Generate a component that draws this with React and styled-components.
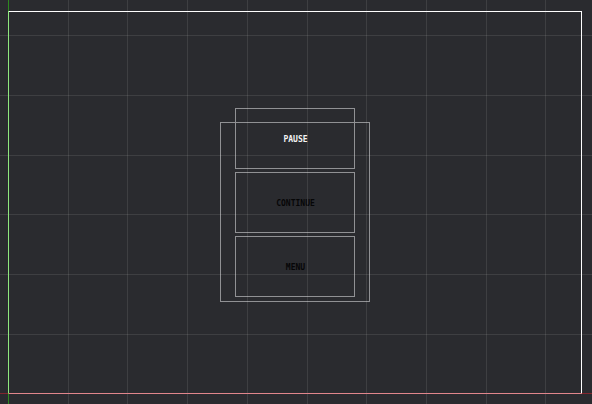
import React from "react";
import styled, { createGlobalStyle } from "styled-components";

const GlobalStyle = createGlobalStyle`
  *, *::before { box-sizing: border-box; }
  body { margin: 0; background: #2a2b2f; }
`;

const Viewport = styled.main`
  position: relative;
  display: flex;
  min-height: 100vh;
  padding: 11px 10px 10px 8px;
  overflow: hidden;
  background: #2a2b2f;
  font-family: "DejaVu Sans Mono", monospace;
`;

const CanvasFrame = styled.section`
  flex: 1;
  display: flex;
  align-items: center;
  justify-content: center;
  border: 1px solid #ffffff;
`;

const MenuStack = styled.div`
  position: relative;
  display: grid;
  grid-template-columns: 120px;
  gap: 3px;

  &::before {
    content: "";
    position: absolute;
    inset: 14px -15px -5px;
    border: 1px solid #909194;
    pointer-events: none;
  }
`;

const Title = styled.h1`
  display: flex;
  align-items: center;
  justify-content: center;
  height: 61px;
  margin: 0;
  padding: 2px 0 0 1px;
  border: 1px solid #909194;
  color: #f4f4f4;
  font-size: 8px;
  font-weight: 700;
  line-height: 10px;
`;

const MenuButton = styled.button`
  height: 61px;
  padding: 2px 0 0 1px;
  border: 1px solid #909194;
  background: transparent;
  color: #060607;
  font: 700 8px/10px "DejaVu Sans Mono", monospace;
`;

const GridOverlay = styled.svg`
  position: absolute;
  inset: 0;
  width: 100%;
  height: 100%;
  pointer-events: none;
`;

const ORIGIN = { x: 8, y: 393 };
const PITCH = 59.7;
const columns = Array.from({ length: 9 }, (_, i) => Math.round(ORIGIN.x + (i + 1) * PITCH));
const rows = Array.from({ length: 6 }, (_, i) => Math.round(ORIGIN.y + 0.5 - (i + 1) * PITCH));

function SceneGrid() {
  return (
    <GridOverlay aria-hidden="true" shapeRendering="crispEdges">
      <g fill="#e0e0e0" fillOpacity="0.11">
        {columns.map((x) => (
          <rect key={x} x={x} y="0" width="1" height="100%" />
        ))}
        {rows.map((y) => (
          <rect key={y} x="0" y={y} width="100%" height="1" />
        ))}
      </g>
      <rect x="0" y={ORIGIN.y} width="100%" height="1" fill="#c8232d" fillOpacity="0.55" />
      <rect x={ORIGIN.x} y="0" width="1" height="100%" fill="#32d714" fillOpacity="0.55" />
    </GridOverlay>
  );
}

export default function App() {
  return (
    <>
      <GlobalStyle />
      <Viewport>
        <CanvasFrame>
          <MenuStack>
            <Title>PAUSE</Title>
            <MenuButton type="button">CONTINUE</MenuButton>
            <MenuButton type="button">MENU</MenuButton>
          </MenuStack>
        </CanvasFrame>
        <SceneGrid />
      </Viewport>
    </>
  );
}
